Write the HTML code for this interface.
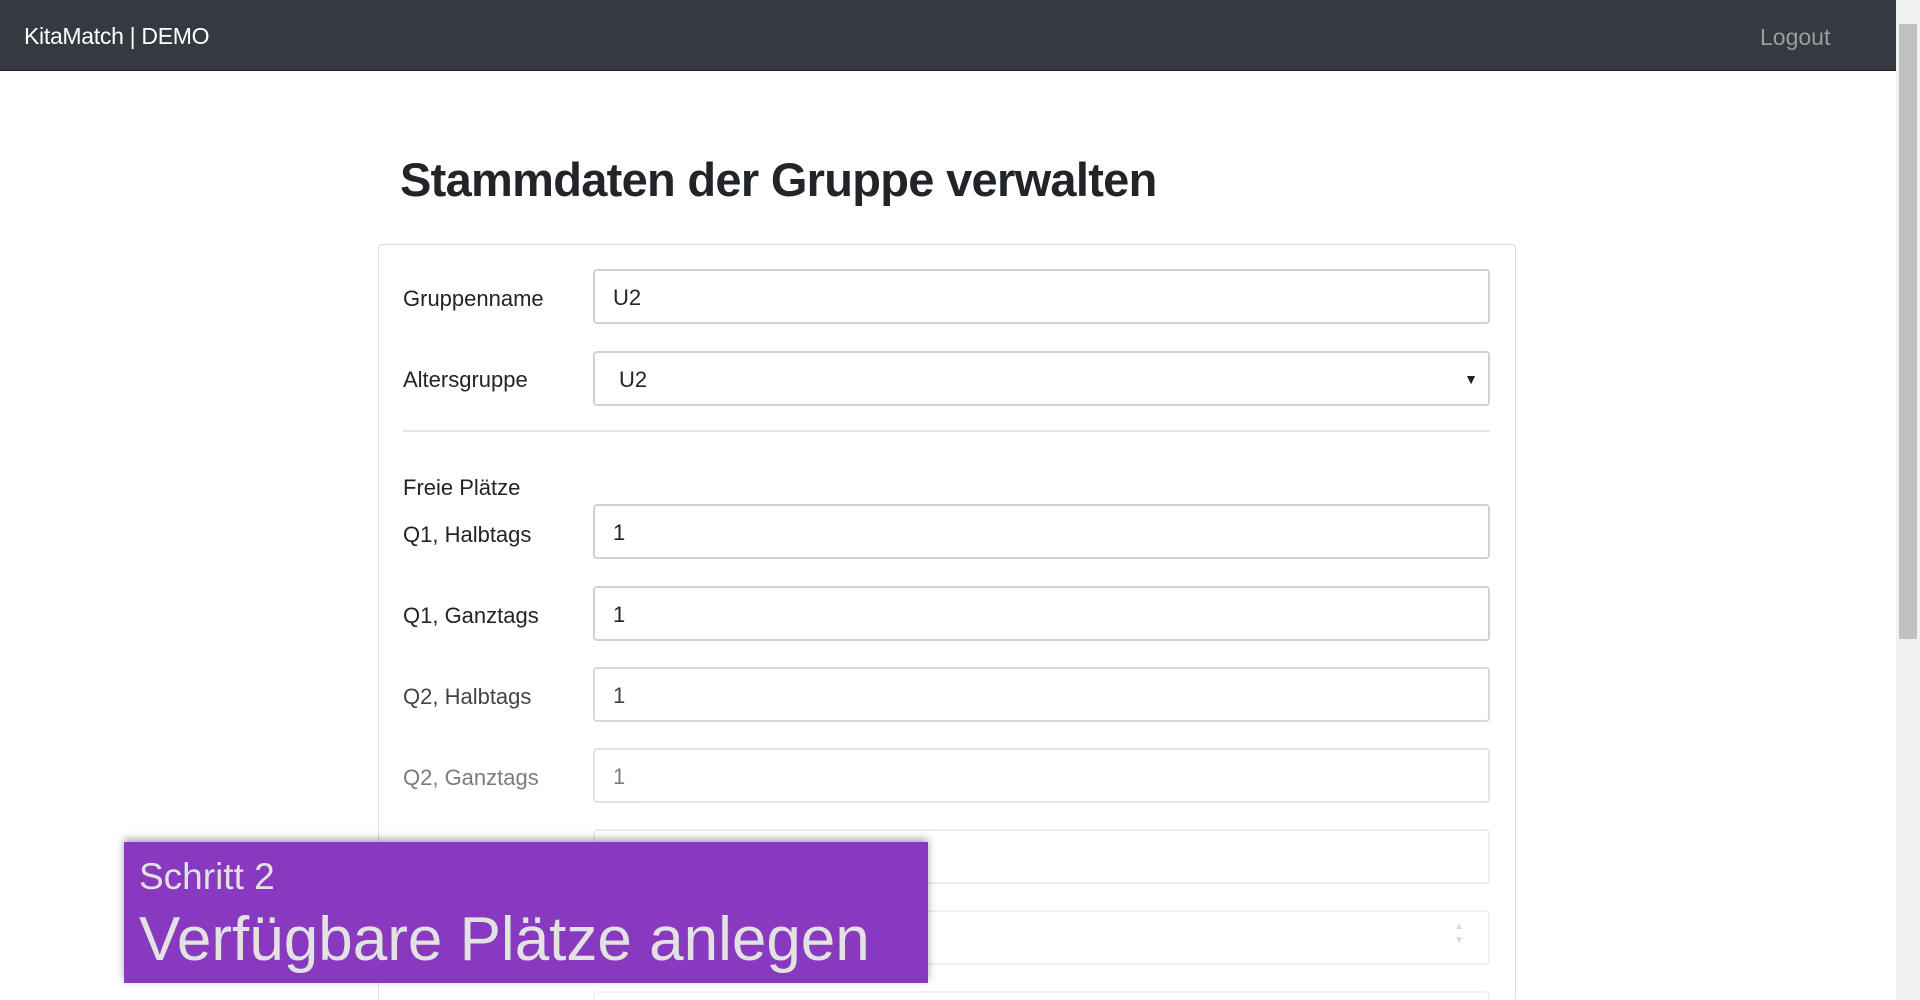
<!DOCTYPE html>
<html><head><meta charset="utf-8"><style>
*{box-sizing:border-box;margin:0;padding:0}
html,body{width:1920px;height:1000px;overflow:hidden}
body{background:#fff;font-family:"Liberation Sans",sans-serif;color:#212529;position:relative}
.nav{position:absolute;left:0;top:0;width:1896px;height:71px;background:#343a40;border-bottom:1px solid #222}
.brand{position:absolute;left:24px;top:23px;font-size:23px;color:#fff;letter-spacing:-0.3px}
.logout{position:absolute;left:1760px;top:24px;font-size:23px;color:#9a9da1}
.sb{position:absolute;left:1896px;top:0;width:24px;height:1000px;background:#f1f1f1}
.thumb{position:absolute;left:1899px;top:24px;width:18px;height:615px;background:#c1c1c1}
h1{position:absolute;left:400px;top:152px;font-size:47px;font-weight:bold;letter-spacing:-0.7px}
.card{position:absolute;left:378px;top:244px;width:1138px;height:755px;border:1px solid #dcdcdc;border-bottom:none;border-radius:4px 4px 0 0}
.lbl{position:absolute;left:403px;font-size:22px;color:#212529}
.in{position:absolute;left:593px;width:897px;height:55px;border:2px solid #cfd2d5;border-radius:4px;font-size:22px;padding:14px 18px}
.hr{position:absolute;left:403px;top:430px;width:1087px;height:2px;background:#e6e6e6}
.ov{position:absolute;left:124px;top:842px;width:804px;height:141px;background:#8839bf;box-shadow:0 -3px 8px rgba(0,0,0,.35);color:#e2e2e2}
.s1{position:absolute;left:15px;top:14px;font-size:37px}
.s2{position:absolute;left:15px;top:62px;font-size:62px}
</style></head><body>
<div class="nav"><div class="brand">KitaMatch | DEMO</div><div class="logout">Logout</div></div>
<div class="sb"></div><div class="thumb"></div>
<h1>Stammdaten der Gruppe verwalten</h1>
<div class="card"></div>
<div class="lbl" style="top:286px">Gruppenname</div>
<div class="in" style="top:269px">U2</div>
<div class="lbl" style="top:367px">Altersgruppe</div>
<div class="in" style="top:351px;padding-left:24px">U2<span style="position:absolute;right:10px;top:18px;font-size:14px">▼</span></div>
<div class="hr"></div>
<div class="lbl" style="top:475px">Freie Plätze</div>
<div class="lbl" style="top:522px">Q1, Halbtags</div>
<div class="in" style="top:504px">1</div>
<div class="lbl" style="top:603px">Q1, Ganztags</div>
<div class="in" style="top:586px">1</div>
<div class="lbl" style="top:684px;opacity:.85">Q2, Halbtags</div>
<div class="in" style="top:667px;opacity:.85">1</div>
<div class="lbl" style="top:765px;opacity:.6">Q2, Ganztags</div>
<div class="in" style="top:748px;opacity:.6">1</div>
<div class="in" style="top:829px;opacity:.4"></div>
<div class="in" style="top:910px;opacity:.3"><span style="position:absolute;right:24px;top:8px;font-size:10px;color:#888;line-height:14px">▲<br>▼</span></div>
<div class="in" style="top:991px;height:9px;border-bottom:none;border-radius:4px 4px 0 0;opacity:.3"></div>
<div class="ov"><div class="s1">Schritt 2</div><div class="s2">Verfügbare Plätze anlegen</div></div>
</body></html>
